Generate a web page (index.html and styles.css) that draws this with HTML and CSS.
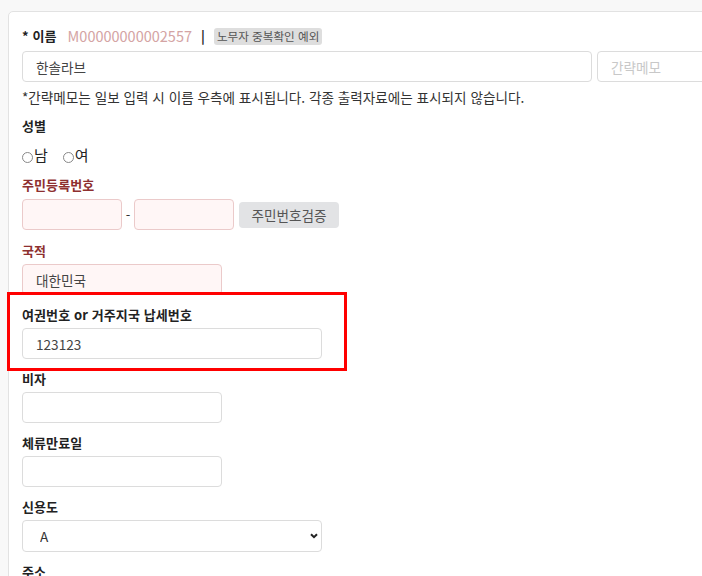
FILE: index.html
```html
<!DOCTYPE html>
<html lang="ko">
<head>
<meta charset="utf-8">
<link rel="stylesheet" href="styles.css">
</head>
<body>
<div class="card">
  <div class="title-row">
    <span class="label">* 이름</span>
    <span class="code">M00000000002557</span>
    <span class="sep">|</span>
    <span class="badge">노무자 중복확인 예외</span>
  </div>
  <div class="name-row">
    <input class="field name" value="한솔라브">
    <input class="field memo" placeholder="간략메모">
  </div>
  <p class="note">*간략메모는 일보 입력 시 이름 우측에 표시됩니다. 각종 출력자료에는 표시되지 않습니다.</p>

  <div class="label plain">성별</div>
  <div class="radios">
    <label class="radio"><input type="radio" name="sex">남</label>
    <label class="radio"><input type="radio" name="sex">여</label>
  </div>

  <div class="group">
    <div class="label req">주민등록번호</div>
    <div class="ssn-row">
      <input class="field pink w100">
      <span class="dash">-</span>
      <input class="field pink w100">
      <button class="btn">주민번호검증</button>
    </div>
  </div>

  <div class="group">
    <div class="label req">국적</div>
    <input class="field pink w200" value="대한민국">
  </div>

  <div class="group">
    <div class="label">여권번호 or 거주지국 납세번호</div>
    <input class="field w300" value="123123">
  </div>

  <div class="group">
    <div class="label">비자</div>
    <input class="field w200">
  </div>

  <div class="group">
    <div class="label">체류만료일</div>
    <input class="field w200">
  </div>

  <div class="group">
    <div class="label">신용도</div>
    <div class="select-wrap">
      <select class="field w300 select"><option>A</option><option>B</option><option>C</option></select>
      <svg class="chev" width="8" height="6" viewBox="0 0 8 6"><path d="M1 1.2 L4 4.2 L7 1.2" fill="none" stroke="#222" stroke-width="2"/></svg>
    </div>
  </div>

  <div class="group">
    <div class="label">주소</div>
    <input class="field w300">
  </div>

  <div class="highlight"></div>
</div>
</body>
</html>
```

FILE: styles.css
```css
html, body {
  margin: 0;
  padding: 0;
  overflow: hidden;
  background: #f8f8f8;
}
body {
  font-family: "Noto Sans CJK KR", "Noto Sans", sans-serif;
  font-size: 13px;
  color: #333;
}
.card {
  position: relative;
  margin: 11px 0 0 8px;
  width: 760px;
  background: #fff;
  border: 1px solid #e2e2e2;
  border-radius: 5px;
  padding: 14px 13px 40px 13px;
  box-sizing: border-box;
}
.title-row {
  display: flex;
  align-items: center;
  height: 20px;
  line-height: 20px;
}
.label {
  font-weight: 700;
  line-height: 20px;
  color: #222;
  letter-spacing: 0.1px;
}
.label.req {
  color: #8e3030;
}
.code {
  color: #d4a4a4;
  margin-left: 11px;
  font-size: 14.5px;
}
.sep {
  font-weight: 700;
  color: #222;
  margin-left: 9px;
}
.badge {
  margin-left: 9px;
  background: #dedede;
  color: #555;
  font-size: 11.6px;
  line-height: 17px;
  padding: 0 3px;
  border-radius: 3px;
}
.name-row {
  display: flex;
  gap: 5px;
  margin-top: 5px;
}
.field {
  box-sizing: border-box;
  height: 31px;
  border: 1px solid #dcdcdc;
  border-radius: 4px;
  background: #fff;
  font-family: inherit;
  font-size: 13.6px;
  color: #444;
  padding: 0 13px;
  margin: 0;
  outline: none;
}
.field::placeholder {
  color: #c8c8c8;
}
.name { width: 570px; }
.memo { width: 150px; }
.pink {
  background: #fff6f6;
  border-color: #ebcaca;
}
.w100 { width: 100px; }
.w200 { width: 200px; display: block; }
.w300 { width: 300px; display: block; }
.note {
  margin: 5px 0 0;
  line-height: 20px;
  font-size: 13.6px;
  color: #333;
}
.plain {
  margin-top: 9px;
}
.radios {
  display: flex;
  gap: 15px;
  margin: 9px 0 1px;
  line-height: 20px;
  font-size: 15px;
  color: #222;
}
.radio {
  display: flex;
  align-items: center;
}
.radio input {
  appearance: none;
  -webkit-appearance: none;
  width: 11px;
  height: 11px;
  margin: 4px 1px 0 0;
  border: 1px solid #888;
  border-radius: 50%;
  box-sizing: border-box;
}
.group {
  margin-top: 10px;
}
.group .label {
  margin-bottom: 3px;
}
.ssn-row {
  display: flex;
  align-items: center;
  height: 33px;
}
.ssn-row .field {
  height: 31px;
}
.dash {
  width: 12px;
  text-align: center;
  color: #333;
}
.btn {
  margin-left: 5px;
  height: 26px;
  width: 100px;
  border: none;
  border-radius: 4px;
  background: #e2e3e5;
  color: #555;
  font-family: inherit;
  font-size: 13.6px;
  padding: 0;
}
.select-wrap {
  position: relative;
  width: 300px;
}
.select {
  appearance: none;
  -webkit-appearance: none;
  padding-left: 17px;
  height: 32px;
  color: #333;
}
.chev {
  position: absolute;
  right: 4px;
  top: 13px;
}
.highlight {
  position: absolute;
  left: -2px;
  top: 280px;
  width: 340px;
  height: 79px;
  border: 3px solid #f00;
  box-sizing: border-box;
  pointer-events: none;
}
```
